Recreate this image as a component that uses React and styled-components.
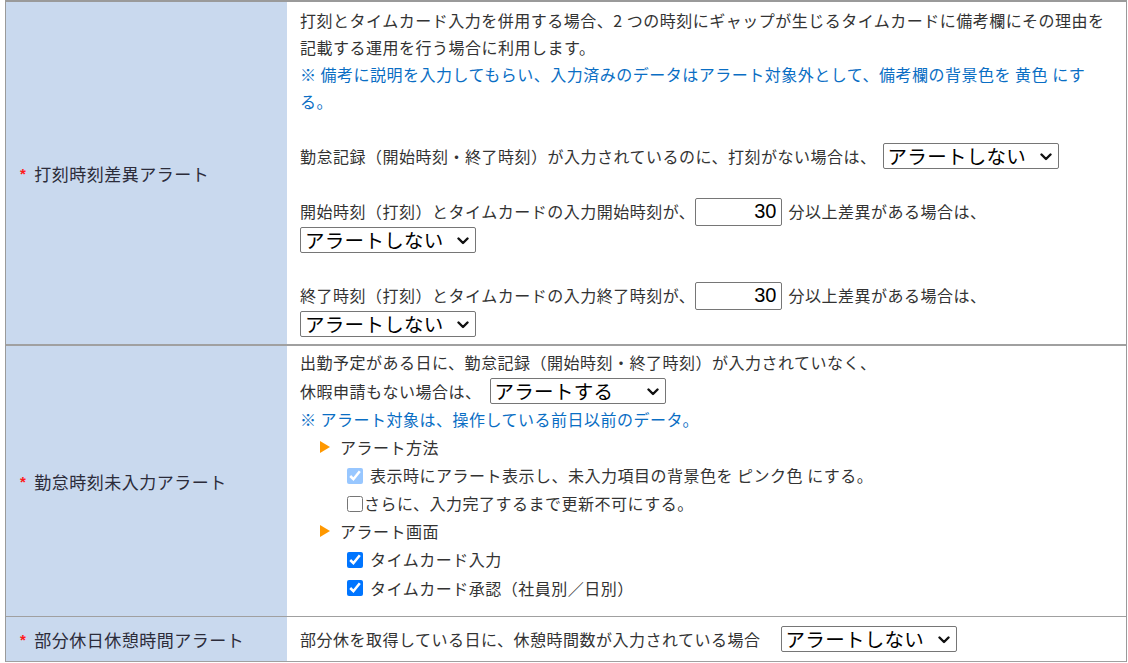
import React from "react";
import styled, { createGlobalStyle } from "styled-components";

const GlobalStyle = createGlobalStyle`
  body {
    margin: 0;
    background: #fff;
    font-family: "Noto Sans CJK JP", "Noto Sans", sans-serif;
    color: #333;
    font-size: 16px;
  }
`;

const Page = styled.div`
  padding-left: 5px;
  width: 1122px;
`;

const Table = styled.div`
  border-top: 2px solid #9a9a9a;
  border-left: 1px solid #9a9a9a;
  border-right: 1px solid #9a9a9a;
`;

const Row = styled.div`
  display: grid;
  grid-template-columns: 281px 1fr;
  border-bottom: ${(props) => (props.thick ? 2 : 1)}px solid #a0a0a0;
`;

const Head = styled.div`
  background: #c9d9ee;
  display: flex;
  align-items: center;
  padding-left: 14px;
  font-size: 17px;
  letter-spacing: 0.5px;
  color: #2c2c3a;
`;

const Mark = styled.span`
  color: #ff1a1a;
  font-weight: bold;
  font-size: 15px;
  margin-right: 8px;
  font-family: "Liberation Sans", sans-serif;
`;

const Body = styled.div`
  padding: ${(props) => props.pad};
  font-size: 16px;
  line-height: 27px;
  letter-spacing: 0.5px;
`;

const Para = styled.div`
  line-height: 27px;
  color: ${(props) => (props.note ? "#0a6ec4" : "#333")};
`;

const Line = styled.div`
  display: flex;
  align-items: center;
  height: ${(props) => props.h || 27}px;
  padding-left: ${(props) => props.indent || 0}px;
  color: ${(props) => (props.note ? "#0a6ec4" : "#333")};
  white-space: nowrap;
`;

const Blank = styled.div`
  height: ${(props) => props.h || 27}px;
`;

const SelectBox = styled.span`
  position: relative;
  display: inline-flex;
  margin: ${(props) => props.m || "0"};
`;

const Select = styled.select`
  appearance: none;
  width: 176px;
  height: 26px;
  margin: 0;
  padding: 0 20px 0 4px;
  font-family: "Noto Sans CJK JP", sans-serif;
  font-size: 19.5px;
  line-height: 24px;
  letter-spacing: 0.3px;
  color: #000;
  background: #fff;
  border: 1px solid #767676;
  border-radius: 2px;
`;

const Chevron = styled.svg`
  position: absolute;
  right: 7px;
  top: 10px;
  width: 12px;
  height: 8px;
  pointer-events: none;
`;

const Minutes = styled.input`
  width: 87px;
  height: 28px;
  box-sizing: border-box;
  margin: 0 6px 0 0;
  padding: 0 5px 0 2px;
  text-align: right;
  font-family: "Liberation Sans", Arial, sans-serif;
  font-size: 20px;
  color: #000;
  border: 1px solid #767676;
  border-radius: 2px;
`;

const Check = styled.input`
  width: 16px;
  height: 16px;
  margin: 0 ${(props) => (props.tight ? 1 : 7)}px 0 0;
  accent-color: #0075ff;
  opacity: ${(props) => (props.faded ? 0.4 : 1)};
  pointer-events: ${(props) => (props.faded ? "none" : "auto")};
`;

const Arrow = styled.svg`
  width: 10px;
  height: 12px;
  margin-right: 10px;
`;

const Triangle = () => (
  <Arrow viewBox="0 0 10 12">
    <polygon points="0,0 10,6 0,12" fill="#ff9800" />
  </Arrow>
);

const AlertSelect = ({ value, m }) => (
  <SelectBox m={m}>
    <Select defaultValue={value}>
      <option value="off">アラートしない</option>
      <option value="on">アラートする</option>
    </Select>
    <Chevron viewBox="0 0 12 8">
      <path
        d="M1.5 1.5 L6 6 L10.5 1.5"
        fill="none"
        stroke="#111"
        strokeWidth="2.4"
        strokeLinecap="round"
        strokeLinejoin="round"
      />
    </Chevron>
  </SelectBox>
);

export default function App() {
  return (
    <Page>
      <GlobalStyle />
      <Table>
        <Row thick>
          <Head>
            <Mark>*</Mark>打刻時刻差異アラート
          </Head>
          <Body pad="5px 13px 6px">
            <Para>
              打刻とタイムカード入力を併用する場合、2 つの時刻にギャップが生じるタイムカードに備考欄にその理由を
              <br />
              記載する運用を行う場合に利用します。
            </Para>
            <Para note>
              ※ 備考に説明を入力してもらい、入力済みのデータはアラート対象外として、備考欄の背景色を 黄色 にす
              <br />
              る。
            </Para>
            <Blank />
            <Line h={28}>
              勤怠記録（開始時刻・終了時刻）が入力されているのに、打刻がない場合は、
              <AlertSelect value="off" m="0 0 0 6px" />
            </Line>
            <Blank />
            <Line h={29}>
              開始時刻（打刻）とタイムカードの入力開始時刻が、
              <Minutes type="text" defaultValue="30" />
              分以上差異がある場合は、
            </Line>
            <Line h={28}>
              <AlertSelect value="off" />
            </Line>
            <Blank />
            <Line h={29}>
              終了時刻（打刻）とタイムカードの入力終了時刻が、
              <Minutes type="text" defaultValue="30" />
              分以上差異がある場合は、
            </Line>
            <Line h={28}>
              <AlertSelect value="off" />
            </Line>
          </Body>
        </Row>
        <Row>
          <Head>
            <Mark>*</Mark>勤怠時刻未入力アラート
          </Head>
          <Body pad="3px 13px 14px">
            <Line>出勤予定がある日に、勤怠記録（開始時刻・終了時刻）が入力されていなく、</Line>
            <Line h={30}>
              休暇申請もない場合は、
              <AlertSelect value="on" m="0 0 0 8px" />
            </Line>
            <Line note>※ アラート対象は、操作している前日以前のデータ。</Line>
            <Line h={28} indent={20}>
              <Triangle />
              アラート方法
            </Line>
            <Line h={29} indent={47}>
              <Check type="checkbox" defaultChecked faded tabIndex={-1} />
              表示時にアラート表示し、未入力項目の背景色を ピンク色 にする。
            </Line>
            <Line indent={47}>
              <Check type="checkbox" tight />
              さらに、入力完了するまで更新不可にする。
            </Line>
            <Line h={28} indent={20}>
              <Triangle />
              アラート画面
            </Line>
            <Line h={29} indent={47}>
              <Check type="checkbox" defaultChecked />
              タイムカード入力
            </Line>
            <Line h={28} indent={47}>
              <Check type="checkbox" defaultChecked />
              タイムカード承認（社員別／日別）
            </Line>
          </Body>
        </Row>
        <Row>
          <Head>
            <Mark>*</Mark>部分休日休憩時間アラート
          </Head>
          <Body pad="7px 13px">
            <Line h={30}>
              部分休を取得している日に、休憩時間数が入力されている場合
              <AlertSelect value="off" m="0 0 0 20px" />
            </Line>
          </Body>
        </Row>
      </Table>
    </Page>
  );
}
